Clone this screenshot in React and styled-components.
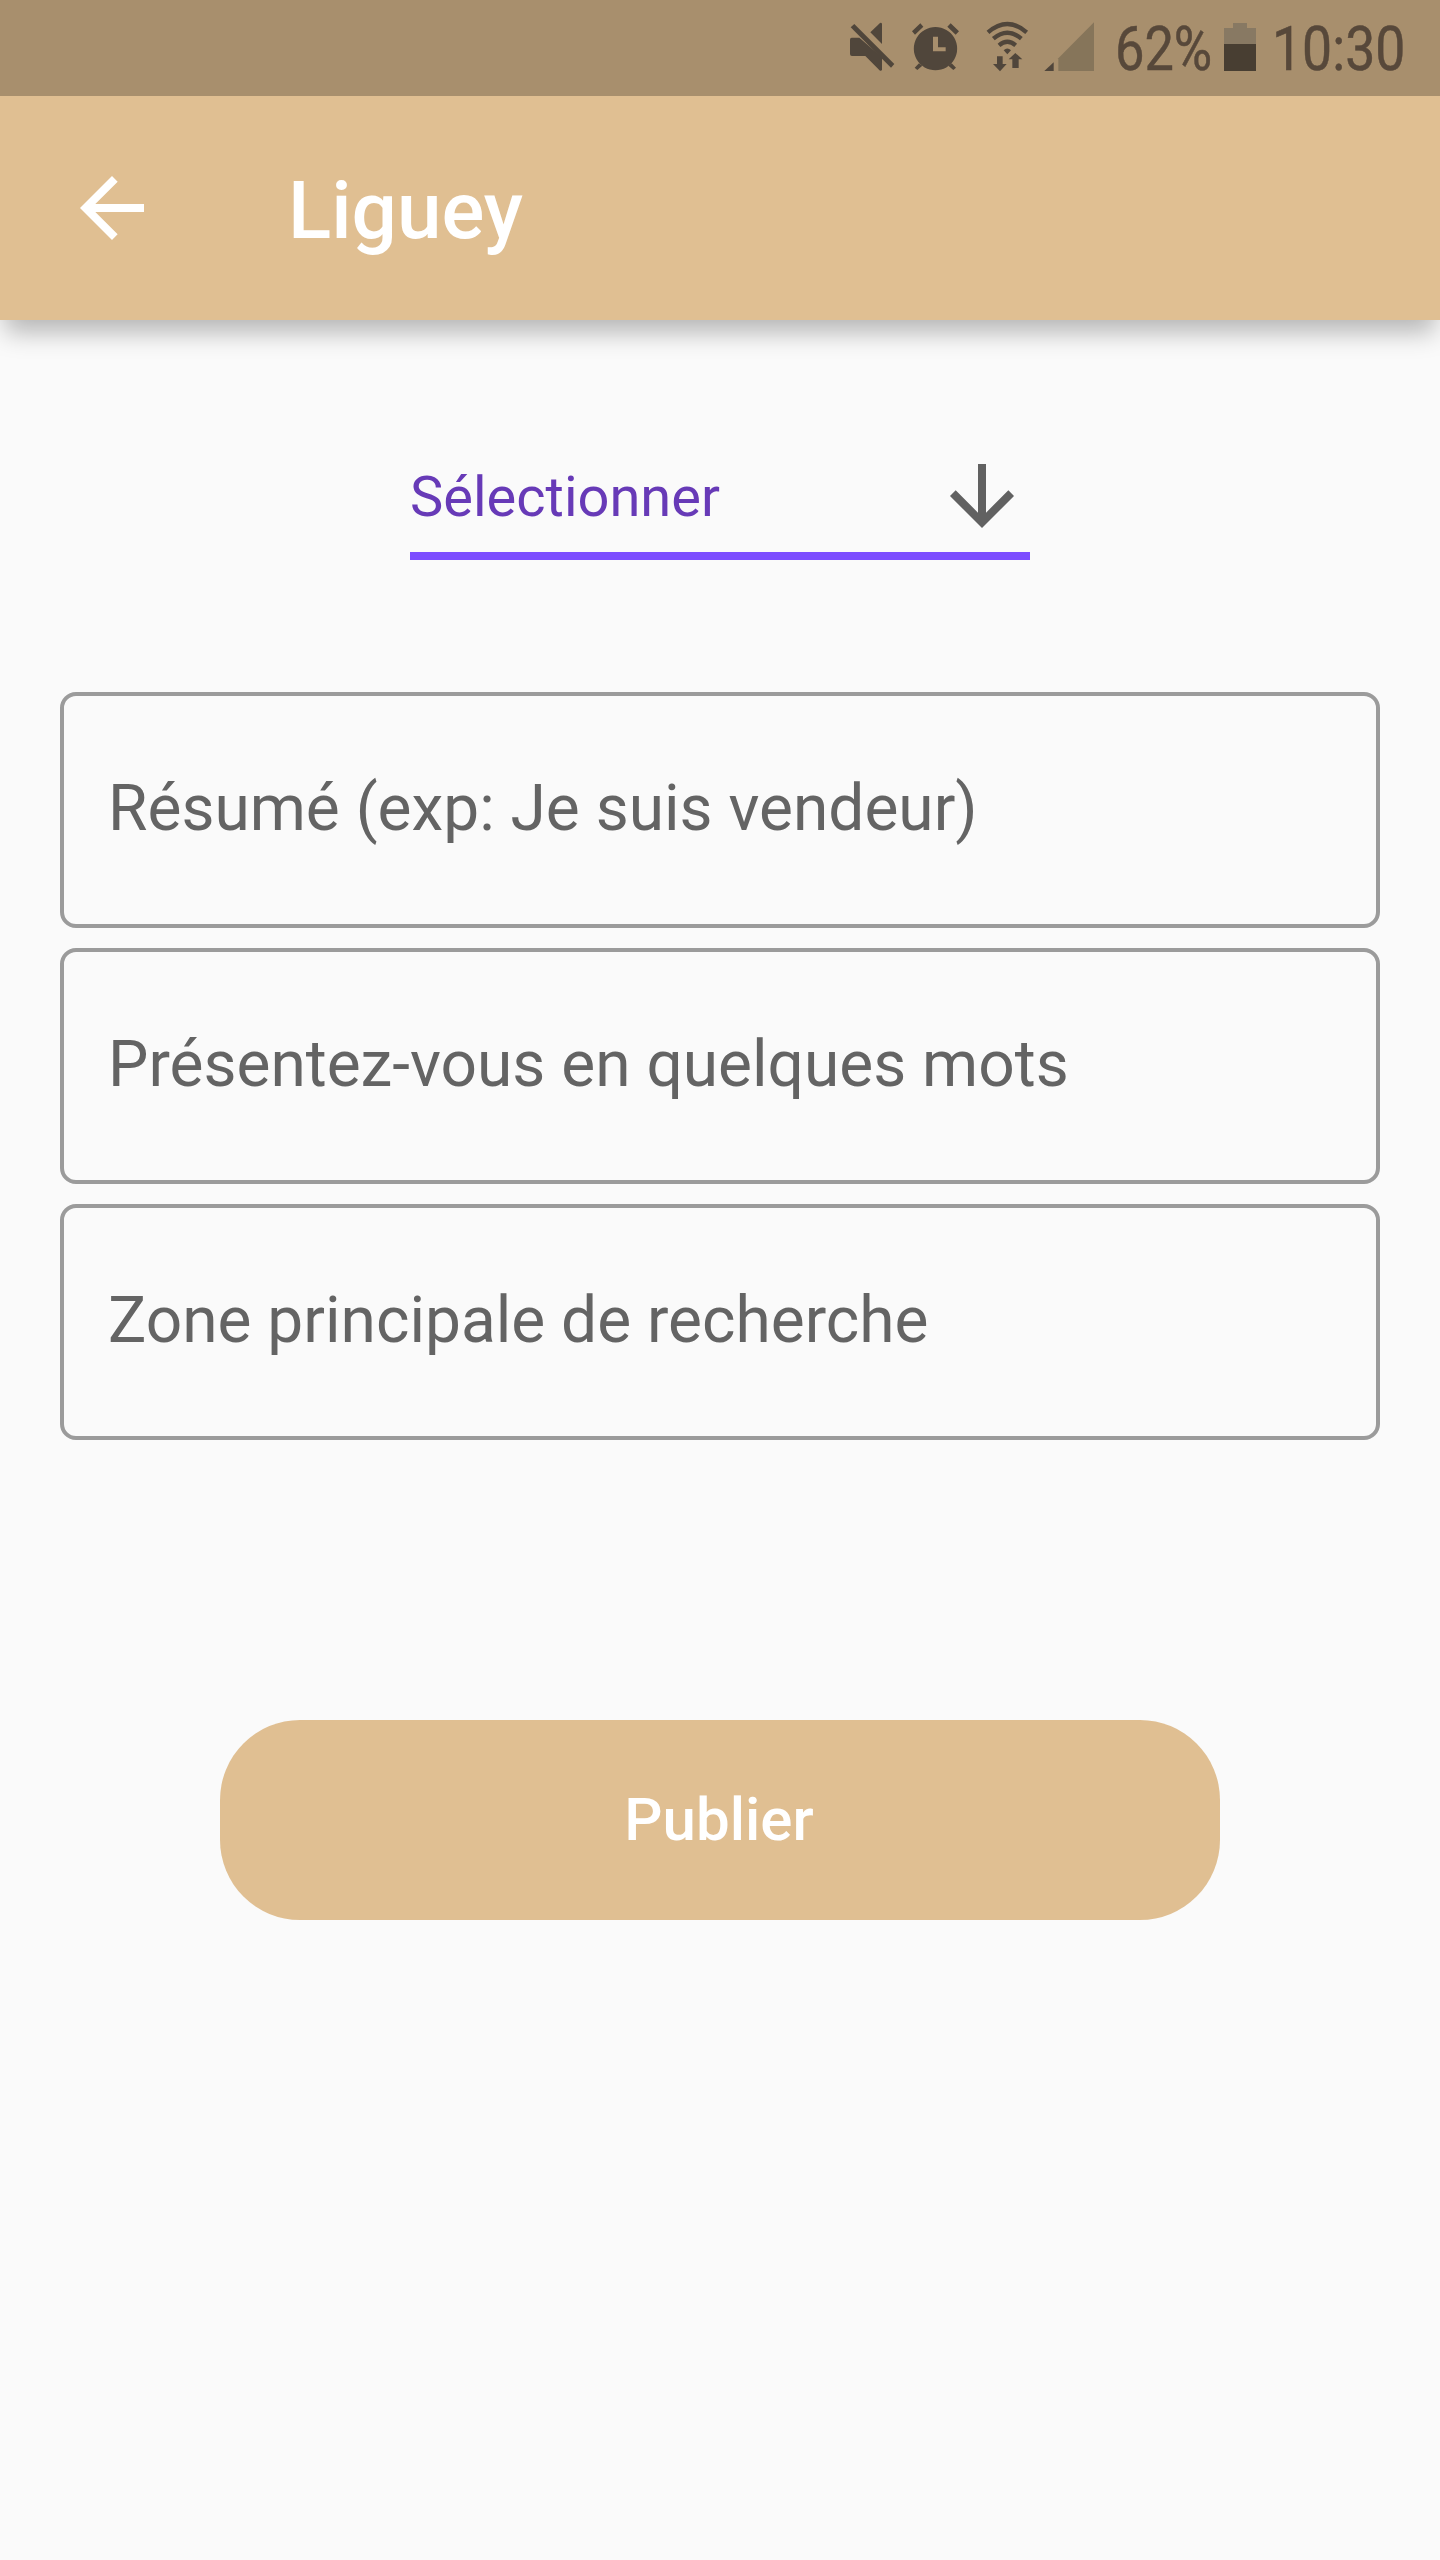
import React from "react";
import styled, { createGlobalStyle } from "styled-components";

const GlobalStyle = createGlobalStyle`
  * { box-sizing: border-box; }
  html, body { margin: 0; padding: 0; background: #fafafa; }
  body { font-family: Roboto, "Noto Sans", sans-serif; }
`;

const Screen = styled.div`
  width: 1440px;
  height: 2560px;
  display: flex;
  flex-direction: column;
  background: #fafafa;
  overflow: hidden;
`;

const Header = styled.header`
  background: #e0bf92;
  box-shadow: 0 17px 24px -5px rgba(0, 0, 0, 0.28);
`;

const StatusBar = styled.div`
  height: 96px;
  display: flex;
  align-items: flex-start;
  padding-left: 850px;
  background: #a88f6d;
  color: #57483a;
`;

const StatusIcon = styled.svg`
  display: block;
  flex: none;
  fill: #50463b;
  margin: ${(p) => p.$top}px ${(p) => p.$after}px 0 0;
`;

const StatusText = styled.span`
  flex: none;
  width: ${(p) => p.$width}px;
  font-size: 61px;
  line-height: 96px;
  padding-top: 1px;
  white-space: nowrap;
  -webkit-text-stroke: 0.5px #57483a;
  transform: scaleX(${(p) => p.$squeeze});
  transform-origin: left center;
`;

const AppBar = styled.div`
  height: 224px;
  display: flex;
  align-items: center;
  padding-left: 64px;
  color: #fff;
`;

const IconButton = styled.button`
  display: flex;
  padding: 0;
  border: 0;
  background: none;
  color: inherit;
`;

const Title = styled.h1`
  margin: 0 0 0 128px;
  padding-top: 5px;
  font-size: 80px;
  line-height: 94px;
  font-weight: 500;
`;

const Form = styled.main`
  display: flex;
  flex-direction: column;
  align-items: center;
  padding: 120px 60px 0;
`;

const Select = styled.div`
  width: 620px;
  height: 120px;
  display: flex;
  justify-content: space-between;
  align-items: center;
  border-bottom: 8px solid #7c4dff;
  font-size: 56px;
  color: #673ab7;
`;

const SelectLabel = styled.span`
  padding-top: 2px;
`;

const Fields = styled.div`
  align-self: stretch;
  display: flex;
  flex-direction: column;
  gap: 20px;
  margin-top: 132px;
`;

const Field = styled.div`
  height: 236px;
  display: flex;
  align-items: center;
  padding: 0 44px 3px;
  border: 4px solid #9b9b9b;
  border-radius: 16px;
  font-size: 64px;
  color: #646464;
  white-space: nowrap;
`;

const Submit = styled.button`
  width: 1000px;
  height: 200px;
  margin-top: 280px;
  padding: 0 2px 2px 0;
  border: 0;
  border-radius: 80px;
  background: #e0bf92;
  color: #fff;
  font-family: inherit;
  font-size: 60px;
  font-weight: 500;
`;

const MutedIcon = () => (
  <StatusIcon $top={22} $after={15} width="46" height="50" viewBox="0 0 138 150">
    <path d="M5 47H28L96 106V143Q95 147 90 146L46 102H6Q0 102 0 96V53Q0 47 5 47Z" />
    <path d="M2 16L13 6L133 126L123 137Z" />
    <path d="M61 31L90 3Q95 1 96 6V66Z" />
  </StatusIcon>
);

const AlarmIcon = () => (
  <StatusIcon $top={22} $after={26} width="49" height="50" viewBox="0 0 147 150">
    <path d="M3 28L28 4L37 14L12 38ZM144 28L119 4L109 14L134 38Z" />
    <path d="M24 124L11 137L19 144L34 131ZM122 124L135 137L127 144L112 131Z" />
    <path
      fillRule="evenodd"
      d="M73.500 15A65 65 0 1 1 73.400 15ZM66 44V88H104V76H81V44Z"
    />
  </StatusIcon>
);

const WifiIcon = () => (
  <StatusIcon $top={21} $after={15} width="43" height="51" viewBox="0 0 129 153">
    <g fill="none" stroke="#50463b" strokeWidth="13">
      <path d="M6 34Q64 -16 122 34" />
      <path d="M22 53Q64 17 106 53" />
      <path d="M39 73Q64 52 89 73" />
    </g>
    <path d="M53 88Q64 77 75 88L64 100Z" />
    <path d="M33 106H50V129H62L42 151L21 129H33Z" />
    <path d="M79 141H98V115H109L88 96L68 115H79Z" />
  </StatusIcon>
);

const SignalIcon = () => (
  <StatusIcon $top={22} $after={21} width="50" height="50" viewBox="0 0 150 150">
    <path d="M1 147L29 121V147Z" />
    <path fill="#86755a" d="M43 109L150 1V147H43Z" />
  </StatusIcon>
);

const BatteryIcon = () => (
  <StatusIcon $top={23} $after={16} width="32" height="48" viewBox="0 0 32 48">
    <path fill="#887963" d="M9 0H23V5H32V21H0V5H9Z" />
    <path fill="#483e32" d="M0 21H32V48H0Z" />
  </StatusIcon>
);

const ArrowBack = () => (
  <svg width="96" height="96" viewBox="0 0 24 24" fill="currentColor">
    <path d="M20 11H7.830l5.590-5.590L12 4l-8 8 8 8 1.410-1.410L7.830 13H20v-2z" />
  </svg>
);

const ArrowDown = () => (
  <svg width="96" height="96" viewBox="0 0 24 24" fill="#616161">
    <path d="M20 12l-1.410-1.410L13 16.170V4h-2v12.170l-5.580-5.590L4 12l8 8 8-8z" />
  </svg>
);

const FIELDS = [
  "Résumé (exp: Je suis vendeur)",
  "Présentez-vous en quelques mots",
  "Zone principale de recherche",
];

export default function App() {
  return (
    <Screen>
      <GlobalStyle />
      <Header>
        <StatusBar>
          <MutedIcon />
          <AlarmIcon />
          <WifiIcon />
          <SignalIcon />
          <StatusText $width={109} $squeeze={0.858}>62%</StatusText>
          <BatteryIcon />
          <StatusText $width={140} $squeeze={0.878}>10:30</StatusText>
        </StatusBar>
        <AppBar>
          <IconButton aria-label="Retour">
            <ArrowBack />
          </IconButton>
          <Title>Liguey</Title>
        </AppBar>
      </Header>
      <Form>
        <Select>
          <SelectLabel>Sélectionner</SelectLabel>
          <ArrowDown />
        </Select>
        <Fields>
          {FIELDS.map((label) => (
            <Field key={label}>{label}</Field>
          ))}
        </Fields>
        <Submit>Publier</Submit>
      </Form>
    </Screen>
  );
}
